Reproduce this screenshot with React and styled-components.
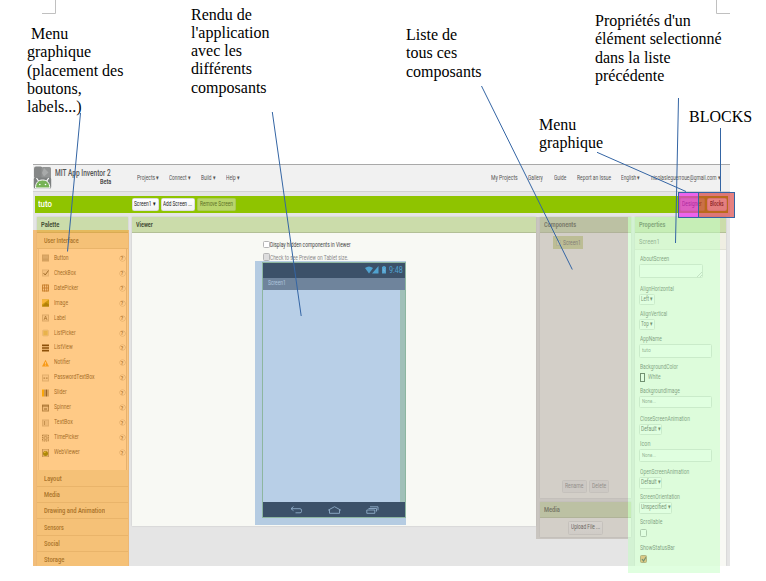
import React, { useLayoutEffect, useRef, useState } from 'react';
import styled, { createGlobalStyle, css } from 'styled-components';

const GlobalStyle = createGlobalStyle`
  *, *::before, *::after { box-sizing: border-box; }
  body { margin: 0; background: #fff; overflow: hidden; }
`;

const Page = styled.main`
  position: relative;
  width: 766px;
  height: 581px;
  overflow: hidden;
  padding: 164px 36px 15px 33px;
  background: #fff;
  font-family: Roboto, 'Liberation Sans', sans-serif;
`;

/* ---- condensed text ---- */
const FitBox = styled.span`
  display: block;
  flex: none;
  width: ${p => p.$w}px;
  margin-left: ${p => p.$ml || 0}px;
  white-space: nowrap;
  font-size: ${p => p.$size || 6.5}px;
  line-height: ${p => p.$lh || 9}px;
  font-weight: ${p => p.$weight || 400};
  color: ${p => p.$color || '#444'};
`;
const FitInner = styled.span`
  display: inline-block;
  transform-origin: 0 50%;
`;

function Fit({ w, ml, size, lh, weight, color, children }) {
  const ref = useRef(null);
  const [scale, setScale] = useState(1);
  useLayoutEffect(() => {
    if (ref.current) setScale(w / ref.current.offsetWidth);
  }, [w]);
  return (
    <FitBox $w={w} $ml={ml} $size={size} $lh={lh} $weight={weight} $color={color}>
      <FitInner ref={ref} style={{ transform: `scaleX(${scale})` }}>{children}</FitInner>
    </FitBox>
  );
}

/* ---- application ---- */
const AppFrame = styled.section`
  display: flex;
  flex-direction: column;
  width: 697px;
  height: 402px;
  overflow: hidden;
  background: #e5e5e5;
`;
const Header = styled.header`
  display: flex;
  flex: none;
  align-items: center;
  height: 27.5px;
  border-top: 1px solid #a9a9a9;
  border-bottom: 1px solid #d2d2d2;
  background: #f1f1f1;
`;
const Brand = styled.div`
  width: 56px;
  height: 21px;
  margin-left: 3px;
  display: flex;
  flex-direction: column;
  align-items: flex-end;
  margin-top: -1px;
`;
const Nav = styled.nav`
  display: flex;
  margin-left: ${p => p.$ml}px;
  padding-top: 1px;
`;
const Toolbar = styled.div`
  display: flex;
  flex: none;
  align-items: center;
  height: 17px;
  margin: 4.5px 2px 4px 2px;
  background: #8fc400;
`;
const Button = styled.button`
  display: flex;
  flex: none;
  align-items: center;
  justify-content: center;
  width: ${p => p.$w}px;
  height: ${p => p.$h || 12.5}px;
  margin: 0 0 0 ${p => p.$ml || 0}px;
  padding: 0;
  border: 1px solid ${p => p.$border || '#dcdcdc'};
  border-radius: 1.5px;
  background: ${p => p.$bg || 'linear-gradient(#fff, #f2f2f2)'};
  font-family: inherit;
`;
const Columns = styled.div`
  display: flex;
  flex: 1;
  align-items: flex-start;
  padding-left: 3.5px;
`;
const Stack = styled.div`
  width: ${p => p.$w}px;
  margin-right: 4px;
  flex: none;
`;
const Panel = styled.section`
  display: flex;
  flex-direction: column;
  flex: none;
  width: ${p => p.$w}px;
  height: ${p => p.$h}px;
  margin: 0 ${p => p.$mr || 0}px ${p => p.$mb || 0}px 0;
  background: #f8f9f4;
  box-shadow: 0 0 1.5px #bbb;
`;
const PanelTitle = styled.h2`
  display: flex;
  flex: none;
  align-items: center;
  height: 16px;
  margin: 0;
  padding: 2px 0 0 4px;
  border-bottom: 1px solid #b3c096;
  background: #cbdcaa;
`;

/* palette */
const Section = styled.div`
  display: flex;
  flex: none;
  align-items: center;
  height: 16.35px;
  padding: 2px 0 0 7px;
  border-bottom: 1px solid #d3d3c4;
  background: #ebeddf;
`;
const PaletteList = styled.ul`
  flex: none;
  height: 221px;
  margin: 0 1px;
  padding: 1.5px 0 0 3px;
  list-style: none;
  background: #fffffd;
  border-left: 1px solid #ddd;
  border-right: 1px solid #ccc;
`;
const PaletteItem = styled.li`
  display: grid;
  grid-template-columns: 12.5px 1fr 6.5px;
  align-items: center;
  height: 14.95px;
`;
const Help = styled.i`
  display: flex;
  width: 5px;
  height: 5px;
  align-items: center;
  justify-content: center;
  border-radius: 50%;
  box-shadow: 0 0 0 0.5px #bbb;
  font: normal 700 5px Roboto, sans-serif;
  color: #555;
`;

/* viewer */
const ViewerBody = styled.div`
  padding: 6.5px 0 0 130.5px;
`;
const CheckRow = styled.label`
  display: flex;
  align-items: center;
  height: 12.5px;
`;
const Checkbox = styled.span`
  display: flex;
  flex: none;
  width: 7px;
  height: ${p => p.$h || 7.5}px;
  margin-top: ${p => p.$mt || 0}px;
  margin-left: ${p => p.$ml || 0}px;
  border: 1px solid ${p => p.$line || '#b5b5b5'};
  border-radius: 1.5px;
  background: ${p => p.$bg || '#fff'};
`;
const Phone = styled.div`
  display: flex;
  flex-direction: column;
  width: 143.5px;
  height: 255.5px;
  margin-top: -2.5px;
  margin-left: -0.5px;
  border: 1px solid #a8cc70;
  background: #fff;
`;
const StatusBar = styled.div`
  display: flex;
  flex: none;
  align-items: center;
  justify-content: flex-end;
  gap: 2px;
  height: 14.5px;
  padding-right: 2.5px;
  background: #060303;
`;
const TitleBar = styled.div`
  display: flex;
  flex: none;
  align-items: center;
  height: 12px;
  padding-left: 4.5px;
  background: #6c6969;
`;
const Screen = styled.div`
  flex: 1;
  border-right: 5px solid #cee1a1;
`;
const NavBar = styled.div`
  display: flex;
  flex: none;
  align-items: center;
  height: 15px;
  padding: 2px 0 0 26.5px;
  gap: 25px;
  background: #060303;
`;

/* components */
const Tree = styled.div`
  flex: 1;
  padding: 3px 0 0 12.5px;
`;
const TreeNode = styled.div`
  display: flex;
  align-items: center;
  width: 30.5px;
  height: 13px;
  padding: 1px 0 0 3.5px;
  background: #cbd48e;
`;
const NodeIcon = styled.span`
  width: 5px;
  height: 6px;
  border: 1px solid #bbc390;
  background: #d8dfaa;
`;
const Actions = styled.div`
  display: flex;
  align-items: center;
  justify-content: center;
  gap: 2px;
  height: ${p => p.$h}px;
`;

/* properties */
const Selected = styled.div`
  display: flex;
  align-items: center;
  height: 17px;
  padding-left: 4px;
  border-bottom: 1px solid #e0e0d5;
  background: #efeee2;
`;
const Properties = styled.div`
  padding: 5px 0 0 4px;
`;
const Property = styled.div`
  height: ${p => p.$h}px;
`;
const Field = styled.div`
  display: flex;
  align-items: center;
  width: ${p => p.$w}px;
  height: ${p => p.$h}px;
  padding-left: ${p => p.$pl || 2}px;
  border: 1px solid #d3d6d3;
  border-radius: 1.5px;
  background: #fff;
  ${p => p.$area && css`
    align-items: flex-end;
    justify-content: flex-end;
  `}
`;
const ColorRow = styled.div`
  display: flex;
  align-items: center;
  height: 10px;
`;
const Swatch = styled.span`
  width: 5px;
  height: 9px;
  margin-left: 0.5px;
  border: 1px solid #222;
  background: #fff;
`;

/* ---- annotations laid over the application ---- */
const Highlight = styled.div`
  position: absolute;
  left: ${p => p.$x}px;
  top: ${p => p.$y}px;
  width: ${p => p.$w}px;
  height: ${p => p.$h}px;
  background: ${p => p.$color};
  ${p => p.$outlined && 'border: 1px solid #3465a4;'}
`;
const Note = styled.p`
  position: absolute;
  left: ${p => p.$x}px;
  top: ${p => p.$y}px;
  margin: 0;
  white-space: pre;
  font: 16px/18.3px 'Liberation Serif', serif;
  color: #000;
`;
const Lines = styled.svg`
  position: absolute;
  inset: 0;
  fill: none;
`;

const paletteItems = [
  ['Button', 14.5, 'button'], ['CheckBox', 22, 'check'], ['DatePicker', 24, 'date'],
  ['Image', 14, 'image'], ['Label', 12, 'label'], ['ListPicker', 22, 'list'],
  ['ListView', 19, 'rows'], ['Notifier', 16, 'warn'], ['PasswordTextBox', 40.5, 'pass'],
  ['Slider', 12.5, 'slider'], ['Spinner', 17, 'spinner'], ['TextBox', 18.5, 'text'],
  ['TimePicker', 25, 'time'], ['WebViewer', 25.5, 'web'],
];

const glyphs = {
  button: <><rect x=".5" y=".5" width="6" height="6" fill="#b9bcc0" stroke="#aaa" /><path d="M1 4h5v2H1z" fill="#a4a8ac" /></>,
  check: <><rect x=".5" y=".5" width="6" height="6" fill="#e8e8e8" stroke="#ccc" /><path d="M1.5 3.5l1.7 2L6.5 1" stroke="#444" fill="none" /></>,
  date: <><rect x=".5" y=".5" width="6" height="6" fill="#eee" stroke="#997755" /><path d="M0 3.5h7M2.5 0v7M4.7 0v7" stroke="#8a5b3d" strokeWidth=".8" /></>,
  image: <><rect width="7" height="7" fill="#9a9a10" /><path d="M0 0h7L0 5z" fill="#f2d560" /><path d="M0 7l4-4 3 2v2z" fill="#666b00" /></>,
  label: <><rect x=".5" y=".5" width="6" height="6" fill="#eee" stroke="#bbb" /><path d="M2 5.5L3.5 1.5 5 5.5M2.5 4h2" stroke="#555" strokeWidth=".7" fill="none" /></>,
  list: <><rect x=".5" y=".5" width="6" height="6" rx="1" fill="#dcdca0" stroke="#ddd" /><path d="M2 2.5h3M2 4.5h3" stroke="#c7c070" /></>,
  rows: <path d="M0 .8h7M0 3.5h7M0 6.2h7" stroke="#1a0a00" strokeWidth="1.7" />,
  warn: <><path d="M3.5 .3L7 7H0z" fill="#f0a020" /><path d="M3.5 2.5v2.3M3.5 5.3v.8" stroke="#fff" strokeWidth=".8" /></>,
  pass: <><rect x=".5" y=".5" width="6" height="6" fill="#eee" stroke="#c5c5c5" /><path d="M1.5 3.7h1.6M4 3.7h1.6" stroke="#777" strokeWidth="1.2" /></>,
  slider: <><path d="M0 0h2v7H0z" fill="#f5b800" /><path d="M2 0h2v7H2z" fill="#999" /><path d="M4 0h1v7H4z" fill="#333" /><path d="M5 0h2v7H5z" fill="#aaa" /></>,
  spinner: <><rect x=".5" y=".5" width="6" height="6" fill="#ddd" stroke="#777" /><path d="M0 1.5h7M2 4.5h3" stroke="#444" /></>,
  text: <><rect x=".5" y=".5" width="6" height="6" fill="#ddd" stroke="#c0c0c0" /><path d="M2.5 1.5v4" stroke="#777" strokeWidth=".8" /></>,
  time: <><rect x=".5" y=".5" width="6" height="6" fill="#ddd" stroke="#777" strokeDasharray="1.2 .7" /><circle cx="3.5" cy="3.5" r="1.6" fill="none" stroke="#777" strokeWidth=".7" /></>,
  web: <><rect x=".5" y="-.5" width="6" height="8" fill="#ddd" stroke="#999" /><circle cx="3.5" cy="4" r="2.5" fill="#5d7a00" /><path d="M2 3.3l2-1" stroke="#d9d94a" /></>,
};

const Logo = () => (
  <svg width="19" height="23" viewBox="0 0 19 23">
    <rect x="1" y=".5" width="8.5" height="12" rx="2" fill="#858787" />
    <rect x="8.5" y="1" width="9.5" height="13" rx="1.500" fill="#929494" />
    <path d="M11 2l4.500 4.500L11 10.500 9 7z" fill="#a8aaaa" />
    <rect x=".8" y="11.500" width="17.400" height="11" rx="1.500" fill="#7d8080" />
    <path d="M2.500 22C2.500 17 5 14 9.600 14s7.200 3 7.200 8z" fill="#76b255" stroke="#fff" strokeWidth="1" />
    <path d="M5.500 15L3.500 12M13.700 15l2-3" stroke="#fff" strokeWidth="1.200" />
    <circle cx="6.800" cy="18.500" r=".8" fill="#fff" />
    <circle cx="12.500" cy="18.500" r=".8" fill="#fff" />
  </svg>
);

const PhoneStatus = () => (
  <svg width="22" height="8" viewBox="0 0 22 8" fill="#2fa4cf">
    <path d="M0 2Q4 -1.2 8 2L4 7.5z" />
    <path d="M13.5 0v7.5H7z" />
    <path d="M17 .8h1.2V0h1.6v.8H21v6.7h-4z" />
    <path d="M19.3 2.2l-1 2.3h1.2l-.7 2" stroke="#cde" strokeWidth=".5" fill="none" />
  </svg>
);
const navIcons = [
  <path d="M3.5 .5L1 2.7l2.5 2M1 2.7h9q1.5 0 1.5 1.5v1.3q0 1.3-1.5 1.3H5.5" />,
  <path d="M.5 4L6.5 .7 12.5 4H11.5v3.300h-10V4z" />,
  <path d="M.8 4h8v3.300h-8zM2.5 2.500h8v3M4 .8h8v3.500" />,
];

const projectMenus = [['Projects ▾', 22, 0], ['Connect ▾', 22, 10], ['Build ▾', 14.5, 10], ['Help ▾', 14, 10]];
const userMenus = [
  ['My Projects', 26.5, 0], ['Gallery', 15, 10.5], ['Guide', 12.5, 10.5],
  ['Report an Issue', 34, 10.5], ['English ▾', 19.5, 10.5], ['nicolasleguerroue@gmail.com ▾', 70, 10.5],
];
const paletteSections = [
  ['Layout', 17.5], ['Media', 15.5], ['Drawing and Animation', 61],
  ['Sensors', 20], ['Social', 15.5], ['Storage', 20],
];
const properties = [
  { name: 'AboutScreen', w: 29, h: 29.5, kind: 'area', fw: 64, fh: 14 },
  { name: 'AlignHorizontal', w: 33.5, h: 25, kind: 'select', value: 'Left ▾', vw: 12, fw: 15.5, fh: 11 },
  { name: 'AlignVertical', w: 27.5, h: 25.5, kind: 'select', value: 'Top ▾', vw: 12, fw: 15.5, fh: 11 },
  { name: 'AppName', w: 22, h: 28, kind: 'input', value: 'tuto', vw: 9, fw: 73, fh: 13.5 },
  { name: 'BackgroundColor', w: 38, h: 23.5, kind: 'color' },
  { name: 'BackgroundImage', w: 40, h: 28.5, kind: 'input', value: 'None...', vw: 13.5, fw: 73, fh: 12.5 },
  { name: 'CloseScreenAnimation', w: 50, h: 25, kind: 'select', value: 'Default ▾', vw: 19.5, fw: 22.5, fh: 11 },
  { name: 'Icon', w: 10, h: 28, kind: 'input', value: 'None...', vw: 13.5, fw: 73, fh: 12.5 },
  { name: 'OpenScreenAnimation', w: 49.5, h: 25, kind: 'select', value: 'Default ▾', vw: 19.5, fw: 22.5, fh: 11.5 },
  { name: 'ScreenOrientation', w: 40, h: 25, kind: 'select', value: 'Unspecified ▾', vw: 30, fw: 33, fh: 11.5 },
  { name: 'Scrollable', w: 22, h: 26, kind: 'check' },
  { name: 'ShowStatusBar', w: 34.5, h: 22, kind: 'check', on: true },
];

function PropertyValue({ p }) {
  if (p.kind === 'area') {
    return <Field $w={p.fw} $h={p.fh} $area><svg width="5" height="5"><path d="M0 5L5 0M3 5l2-2" stroke="#aaa" strokeWidth=".7" /></svg></Field>;
  }
  if (p.kind === 'color') {
    return <ColorRow><Swatch /><Fit w={13} ml={3} color="#444">White</Fit></ColorRow>;
  }
  if (p.kind === 'check') {
    return (
      <Checkbox $mt={2} $ml={1} $h={8} $line={p.on ? '#a06a40' : '#999'} $bg={p.on ? '#f09048' : '#fff'}>
        {p.on && <svg width="6" height="6"><path d="M1 3l1.5 2L5.5 .5" fill="none" stroke="#222" strokeWidth="1.2" /></svg>}
      </Checkbox>
    );
  }
  return (
    <Field $w={p.fw} $h={p.fh} $pl={p.kind === 'select' ? 1 : 2}>
      <Fit w={p.vw} size={p.kind === 'select' ? 6.5 : 5.5} color={p.kind === 'select' ? '#222' : '#666'}>{p.value}</Fit>
    </Field>
  );
}

const Title = ({ w, children }) => (
  <PanelTitle><Fit w={w} size={7} weight={700} color="#465036">{children}</Fit></PanelTitle>
);

export default function App() {
  return (
    <Page>
      <GlobalStyle />
      <AppFrame>
        <Header>
          <Logo />
          <Brand>
            <Fit w={56} size={9.5} lh={11} weight={500} color="#555">MIT App Inventor 2</Fit>
            <Fit w={11} size={6.5} lh={8} weight={600} color="#444">Beta</Fit>
          </Brand>
          <Nav $ml={26}>
            {projectMenus.map(([t, w, ml]) => <Fit key={t} w={w} ml={ml} color="#555">{t}</Fit>)}
          </Nav>
          <Nav $ml={251.5}>
            {userMenus.map(([t, w, ml]) => <Fit key={t} w={w} ml={ml} color="#555">{t}</Fit>)}
          </Nav>
        </Header>
        <Toolbar>
          <Fit w={14} ml={3} size={9} lh={13} weight={500} color="#fff">tuto</Fit>
          <Button $w={27} $ml={79.5}><Fit w={21.5} color="#222">Screen1 ▾</Fit></Button>
          <Button $w={34.5} $ml={2}><Fit w={29} color="#222">Add Screen ...</Fit></Button>
          <Button $w={39} $ml={2} $bg="#b9d56c" $border="#aac958"><Fit w={33} color="#5c7024">Remove Screen</Fit></Button>
          <Button $w={25} $ml={443.5} $bg="#b9d56c" $border="#aac958"><Fit w={20} color="#2c4000">Designer</Fit></Button>
          <Button $w={20.5} $ml={2}><Fit w={14} weight={500} color="#111">Blocks</Fit></Button>
        </Toolbar>
        <Columns>
          <Panel $w={91.5} $h={349} $mr={4}>
            <Title w={18}>Palette</Title>
            <Section><Fit w={35} size={7} weight={600} color="#55574c">User Interface</Fit></Section>
            <PaletteList>
              {paletteItems.map(([name, w, icon]) => (
                <PaletteItem key={name}>
                  <svg width="7" height="8" viewBox="0 0 7 7">{glyphs[icon]}</svg>
                  <Fit w={w} color="#444">{name}</Fit>
                  <Help>?</Help>
                </PaletteItem>
              ))}
            </PaletteList>
            {paletteSections.map(([t, w]) => (
              <Section key={t}><Fit w={w} size={7} weight={600} color="#55574c">{t}</Fit></Section>
            ))}
          </Panel>
          <Panel $w={403.5} $h={309} $mr={4.5}>
            <Title w={17}>Viewer</Title>
            <ViewerBody>
              <CheckRow><Checkbox $mt={-3} /><Fit w={80.5} ml={0.5}>Display hidden components in Viewer</Fit></CheckRow>
              <CheckRow><Checkbox $mt={-3} $bg="#ddd" /><Fit w={78.5} ml={0.5} color="#888">Check to see Preview on Tablet size.</Fit></CheckRow>
              <Phone>
                <StatusBar><PhoneStatus /><Fit w={13.5} size={9} lh={13} color="#2fa4cf">9:48</Fit></StatusBar>
                <TitleBar><Fit w={18} color="#e5e5e5">Screen1</Fit></TitleBar>
                <Screen />
                <NavBar>
                  {navIcons.map((icon, i) => <svg key={i} width="13" height="8" fill="none" stroke="#aebac2" strokeWidth=".9">{icon}</svg>)}
                </NavBar>
              </Phone>
            </ViewerBody>
          </Panel>
          <Stack $w={91}>
            <Panel $w={91} $h={280.5} $mb={4.5}>
              <Title w={32}>Components</Title>
              <Tree><TreeNode><NodeIcon /><Fit w={18} ml={2} color="#555">Screen1</Fit></TreeNode></Tree>
              <Actions $h={22.5}>
                <Button $w={24.5} $h={13} $bg="#eceded"><Fit w={18.5} color="#777">Rename</Fit></Button>
                <Button $w={20} $h={13} $bg="#eceded"><Fit w={14} color="#777">Delete</Fit></Button>
              </Actions>
            </Panel>
            <Panel $w={91} $h={35}>
              <Title w={15.5}>Media</Title>
              <Actions $h={20}><Button $w={35} $h={14}><Fit w={29} color="#222">Upload File ...</Fit></Button></Actions>
            </Panel>
          </Stack>
          <Panel $w={91} $h={349}>
            <Title w={26.5}>Properties</Title>
            <Selected><Fit w={20.5} size={7.5} color="#666">Screen1</Fit></Selected>
            <Properties>
              {properties.map(p => (
                <Property key={p.name} $h={p.h}>
                  <Fit w={p.w} ml={0.5} lh={9} color="#444">{p.name}</Fit>
                  <PropertyValue p={p} />
                </Property>
              ))}
            </Properties>
          </Panel>
        </Columns>
      </AppFrame>

      <Highlight $x={33} $y={230} $w={96} $h={336} $color="rgba(255,149,15,.5)" />
      <Highlight $x={255} $y={261} $w={151} $h={264} $color="rgba(114,159,207,.5)" />
      <Highlight $x={536} $y={217} $w={92} $h={322} $color="rgba(174,165,156,.5)" />
      <Highlight $x={628} $y={217} $w={92} $h={356} $color="rgba(194,255,194,.5)" />
      <Highlight $x={678} $y={192} $w={21} $h={26} $color="rgba(240,30,240,.65)" $outlined />
      <Highlight $x={698} $y={192} $w={37} $h={26} $color="rgba(215,45,45,.6)" $outlined />

      <Note $x={27} $y={25}>{' Menu\ngraphique\n(placement des\nboutons,\nlabels...)'}</Note>
      <Note $x={191} $y={5.6}>{"Rendu de\nl'application\navec les\ndifférents\ncomposants"}</Note>
      <Note $x={406} $y={26}>{'Liste de\ntous ces\ncomposants'}</Note>
      <Note $x={595} $y={12}>{"Propriétés d'un\nélément selectionné\ndans la liste\nprécédente"}</Note>
      <Note $x={539} $y={115.5}>{'Menu\ngraphique'}</Note>
      <Note $x={689} $y={107.5}>BLOCKS</Note>

      <Lines width="766" height="581">
        <path d="M42 13.5H55.5V0M730 13.5H716.5V0" stroke="#c0c0c0" />
        <path d="M80.5 113L67.5 251.5M272.3 112L301.2 316M481.5 86L572.3 269.5M597 152.3L686 191.5M678.5 98L675.5 243M720.5 128V191.5" stroke="#3465a4" />
      </Lines>
    </Page>
  );
}
